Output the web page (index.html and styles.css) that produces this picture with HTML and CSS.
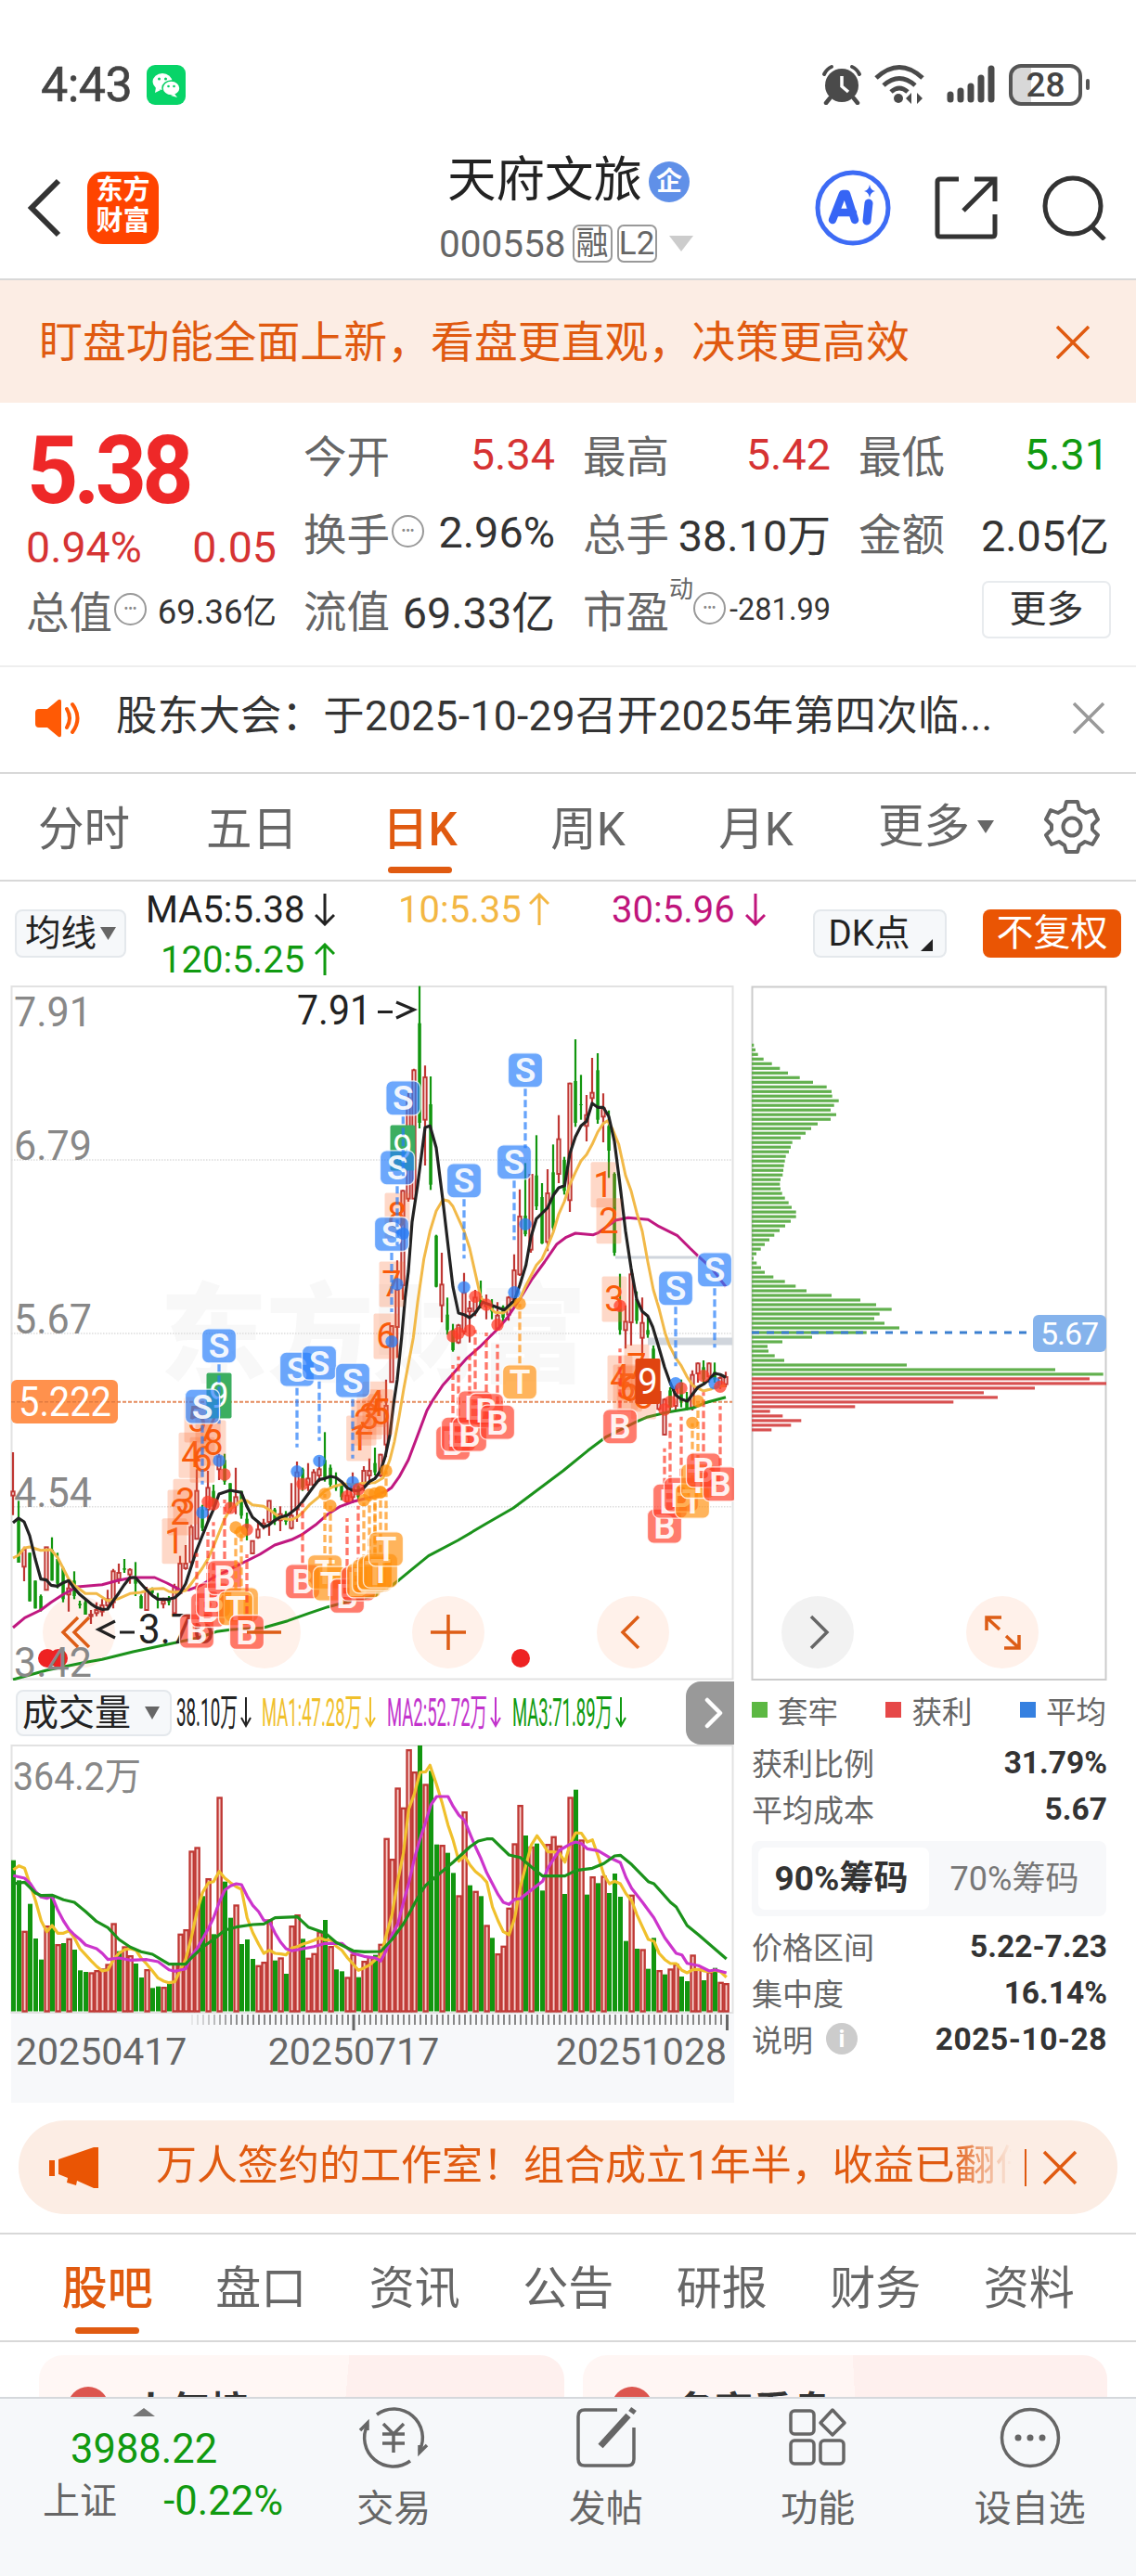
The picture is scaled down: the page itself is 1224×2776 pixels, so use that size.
FILE: index.html
```html
<!DOCTYPE html>
<html lang="zh-CN">
<head>
<meta charset="utf-8">
<title>天府文旅 000558</title>
<link rel="stylesheet" href="styles.css">
</head>
<body>
<div class="phone">
  <div class="status">
    <span class="clock">4:43</span>
    <svg class="wechat" width="42" height="43" viewBox="0 0 42 43"><rect width="42" height="43" rx="9" fill="#07d468"/><ellipse cx="17" cy="18" rx="10.5" ry="9" fill="#fff"/><path d="M10 24l-1 6 6-3z" fill="#fff"/><ellipse cx="26.500" cy="25" rx="9.500" ry="8" fill="#fff" stroke="#07cf64" stroke-width="1.500"/><path d="M30 31l3 4-7-2z" fill="#fff"/><g fill="#07cf64"><circle cx="13.500" cy="15" r="1.500"/><circle cx="20.500" cy="15" r="1.500"/><circle cx="23.500" cy="23" r="1.300"/><circle cx="29.500" cy="23" r="1.300"/></g></svg>
    <span class="grow"></span>
    <svg width="44" height="44" viewBox="0 0 44 44"><circle cx="22" cy="23" r="18" fill="#4a4a4a"/><path d="M22 13v11l7 6" stroke="#fff" stroke-width="3.500" fill="none"/><path d="M3 11q3-6 8-8M41 11q-3-6-8-8" stroke="#4a4a4a" stroke-width="4" fill="none" stroke-linecap="round"/><path d="M9 37l-4 5M35 37l4 5" stroke="#4a4a4a" stroke-width="4.500" stroke-linecap="round"/></svg>
    <svg class="wifi" width="54" height="44" viewBox="0 0 54 44" fill="none" stroke="#4a4a4a" stroke-width="5"><path d="M2 15Q27-8 52 15M10 23Q27 8 44 23M18 30Q27 22 36 30"/><circle cx="26" cy="37" r="5" fill="#4a4a4a" stroke="none"/><path d="M40 31v12l-6-6zM46 31v12l6-6z" fill="#4a4a4a" stroke="none"/></svg>
    <svg class="signal" width="52" height="44" viewBox="0 0 52 44" stroke="#4a4a4a" stroke-width="7" stroke-linecap="round"><path d="M4 33v5M15 29v9M26 24v14M37 15v23M48 5v33"/></svg>
    <span class="battery"><b>28</b></span><i class="battery-tip"></i>
  </div>

  <header class="header">
    <svg class="back" width="38" height="64" viewBox="0 0 38 64" fill="none" stroke="#333" stroke-width="6"><path d="M34 3L5 32l29 29"/></svg>
    <div class="logo">东方<br>财富</div>
    <div class="title">
      <div class="name">天府文旅<span class="corp">企</span></div>
      <div class="code"><span>000558</span><i>融</i><i>L2</i><svg width="26" height="17" viewBox="0 0 26 17"><path d="M0 0h26L13 17z" fill="#ccc"/></svg></div>
    </div>
    <svg class="ai" width="82" height="82" viewBox="0 0 82 82"><circle cx="41" cy="41" r="38" fill="#fff" stroke="#3d6bf5" stroke-width="5"/><path d="M19 54L30 26h4l9 28M23 46h18" fill="none" stroke="#3665f5" stroke-width="8.500" stroke-linejoin="round" stroke-linecap="round"/><path d="M58 36l-2 19" stroke="#3665f5" stroke-width="9" stroke-linecap="round"/><path d="M59 16q1 6 6 7-5 1-6 7-1-6-6-7 5-1 6-7z" fill="#3665f5"/></svg>
    <svg class="share" width="68" height="68" viewBox="0 0 68 68" fill="none" stroke="#333" stroke-width="5"><path d="M26 3H6q-3 0-3 3v56q0 3 3 3h56q3 0 3-3V41M43 3h22v24M65 3L31 37"/></svg>
    <svg class="search" width="70" height="70" viewBox="0 0 70 70" fill="none" stroke="#333" stroke-width="5"><circle cx="33" cy="33" r="30"/><path d="M53 55l14 14"/></svg>
  </header>

  <div class="promo"><span>盯盘功能全面上新，看盘更直观，决策更高效</span><svg width="36" height="36" viewBox="0 0 36 36" stroke="#e05a10" stroke-width="3.500"><path d="M1 1l34 34M35 1L1 35"/></svg></div>

  <section class="quote">
    <div class="price">
      <strong>5.38</strong>
      <div class="pair up"><span>0.94%</span><span>0.05</span></div>
      <div class="pair"><label>总值<i class="dots">•••</i></label><em class="mid">69.36亿</em></div>
    </div>
    <div class="cells">
      <div><label>今开</label><em class="up">5.34</em></div>
      <div><label>最高</label><em class="up">5.42</em></div>
      <div><label>最低</label><em class="down">5.31</em></div>
      <div><label>换手<i class="dots">•••</i></label><em>2.96%</em></div>
      <div><label>总手</label><em>38.10万</em></div>
      <div><label>金额</label><em>2.05亿</em></div>
      <div><label>流值</label><em>69.33亿</em></div>
      <div><label>市盈<sup>动</sup><i class="dots">•••</i></label><em class="small">-281.99</em></div>
      <div><button class="more">更多</button></div>
    </div>
  </section>

  <div class="notice">
    <svg width="52" height="42" viewBox="0 0 52 42"><path d="M4 11h9L25 1q3-1 3 2v36q0 3-3 2L13 31H4q-4 0-4-4V15q0-4 4-4z" fill="#ff5a05"/><path d="M34 11q6 10 0 20M40 6q11 15 0 30" fill="none" stroke="#ff5a05" stroke-width="4" stroke-linecap="round"/></svg>
    <span>股东大会：于2025-10-29召开2025年第四次临...</span>
    <svg width="34" height="34" viewBox="0 0 34 34" stroke="#999" stroke-width="3.500"><path d="M1 1l32 32M33 1L1 33"/></svg>
  </div>

  <nav class="periods">
    <a>分时</a><a>五日</a><a class="on">日K</a><a>周K</a><a>月K</a><a class="last">更多<svg width="18" height="14" viewBox="0 0 18 14"><path d="M0 0h18L9 14z" fill="#666"/></svg></a>
    <svg class="gear" width="60" height="60" viewBox="-30 -30 60 60" fill="none" stroke="#666" stroke-width="4" stroke-linejoin="round"><path d="M-6-27H6L8-19 15-15 23-18 28-8 22-2V3L28 9 22 19 14 16 8 20 6 27H-6L-8 20-14 16-22 19-28 9-22 3V-2L-28-8-23-18-15-15-8-19Z"/><circle r="9.500"/></svg>
  </nav>

  <div class="averages">
    <button class="chip">均线<svg width="17" height="14" viewBox="0 0 17 14"><path d="M0 0h17L8.500 14z" fill="#666"/></svg></button>
    <div class="ma">
      <span class="c5">MA5:5.38<svg width="22" height="36" viewBox="0 0 22 36"><path d="M11 1v33M1 24l10 10 10-10"/></svg></span>
      <span class="c10">10:5.35<svg width="22" height="36" viewBox="0 0 22 36"><path d="M11 35V2M1 12L11 2l10 10"/></svg></span>
      <span class="c30">30:5.96<svg width="22" height="36" viewBox="0 0 22 36"><path d="M11 1v33M1 24l10 10 10-10"/></svg></span>
      <span class="c120">120:5.25<svg width="22" height="36" viewBox="0 0 22 36"><path d="M11 35V2M1 12L11 2l10 10"/></svg></span>
    </div>
    <button class="chip dk">DK点<svg width="13" height="13" viewBox="0 0 13 13"><path d="M13 0v13H0z" fill="#222"/></svg></button>
    <button class="chip adj">不复权</button>
  </div>

  <main class="board">
    <div class="left">
      <svg id="kline" class="kline" width="780" height="749" viewBox="11 1062 780 749"></svg>
      <div class="volbar">
        <button class="chip vol">成交量<svg width="16" height="14" viewBox="0 0 16 14"><path d="M0 0h16L8 14z" fill="#666"/></svg></button>
        <svg id="vollabels" width="500" height="60" viewBox="190 1816 500 60"></svg>
        <span class="side"><svg width="22" height="34" viewBox="0 0 22 34" fill="none" stroke="#fff" stroke-width="4.500" stroke-linecap="round" stroke-linejoin="round"><path d="M3 3l14 14L3 31"/></svg></span>
      </div>
      <svg id="volume" class="volume" width="780" height="290" viewBox="11 1880 780 290"></svg>
      <div class="axis">
        <svg id="ticks" width="780" height="18" viewBox="11 2170 780 18"></svg>
        <div class="dates"><span>20250417</span><span>20250717</span><span>20251028</span></div>
      </div>
    </div>
    <div class="right">
      <svg id="chips" class="chips" width="384" height="749" viewBox="809 1062 384 749"></svg>
      <div class="legend"><span><i class="g"></i>套牢</span><span><i class="r"></i>获利</span><span><i class="b"></i>平均</span></div>
      <div class="row"><span>获利比例</span><b>31.79%</b></div>
      <div class="row"><span>平均成本</span><b>5.67</b></div>
      <div class="seg"><b>90%筹码</b><span>70%筹码</span></div>
      <div class="row"><span>价格区间</span><b>5.22-7.23</b></div>
      <div class="row"><span>集中度</span><b>16.14%</b></div>
      <div class="row"><span>说明<i class="info">i</i></span><b class="wide">2025-10-28</b></div>
    </div>
  </main>

  <div class="adwrap"><div class="ad">
    <svg width="54" height="44" viewBox="0 0 54 44" fill="#ea5504"><path d="M0 14h6v17H0zM10 13L48 0h5v44h-5l-18-8-1 5-10-3 1-5-10-4z"/></svg>
    <span class="adtext">万人签约的工作室！组合成立1年半，收益已翻倍</span>
    <i></i>
    <svg width="38" height="38" viewBox="0 0 38 38" stroke="#e05a10" stroke-width="3.500"><path d="M2 2l34 34M36 2L2 36"/></svg>
  </div></div>

  <nav class="tabs"><a class="on">股吧</a><a>盘口</a><a>资讯</a><a>公告</a><a>研报</a><a>财务</a><a>资料</a></nav>

  <section class="cards">
    <div class="card"><i></i><b>人气榜</b></div>
    <div class="card two"><i></i><b>名家看盘</b></div>
  </section>

  <footer class="bottom">
    <div class="index">
      <svg width="24" height="9" viewBox="0 0 24 9"><path d="M12 0l12 9H0z" fill="#777"/></svg>
      <strong>3988.22</strong>
      <p><span>上证</span><em>-0.22%</em></p>
    </div>
    <div class="item"><svg width="76" height="68" viewBox="-38 -34 76 68" fill="none" stroke="#666" stroke-width="3.500"><path d="M-18-25A31 31 0 0 1 28 14M18 25A31 31 0 0 1-28-14"/><path d="M-36-8l8-8v8M36 8l-8 8V8M-11-15L0-4 11-15M-12-4h24M-12 6h24M0-4v20"/></svg>交易</div>
    <div class="item"><svg width="68" height="68" viewBox="-34 -34 68 68" fill="none" stroke="#666" stroke-width="3.500"><path d="M12-30h-35q-7 0-7 7v46q0 7 7 7h46q7 0 7-7v-34"/><path d="M-6 9L24-24" stroke-width="7"/><path d="M27-27l3-4" stroke-width="7"/></svg>发帖</div>
    <div class="item"><svg width="68" height="68" viewBox="-34 -34 68 68" fill="none" stroke="#666" stroke-width="3.500"><rect x="-29" y="-29" width="25" height="25" rx="4"/><path d="M16-30L29-16 16-3 3-16z" stroke-linejoin="round"/><rect x="-29" y="3" width="25" height="25" rx="4"/><rect x="3" y="3" width="25" height="25" rx="4"/></svg>功能</div>
    <div class="item"><svg width="68" height="68" viewBox="-34 -34 68 68"><circle r="30.500" fill="none" stroke="#666" stroke-width="3.500"/><g fill="#666"><circle cx="-13" r="3.500"/><circle r="3.500"/><circle cx="13" r="3.500"/></g></svg>设自选</div>
  </footer>
</div>
<script src="charts.js"></script>
</body>
</html>
```
FILE: styles.css
```css
* { box-sizing: border-box; }
body { margin: 0; background: #fff; color: #333; font-family: Roboto, "Noto Sans CJK SC", sans-serif; }
svg { display: block; flex: none; }
i, em { font-style: normal; }
button { font: inherit; margin: 0; padding: 0; }
.phone { width: 1224px; height: 2776px; overflow: hidden; display: flex; flex-direction: column; }
.phone > * { flex: none; }
.grow { flex: 1; }

.status { height: 149px; padding: 33px 50px 0 44px; display: flex; align-items: center; }
.clock { font-size: 52px; font-weight: 400; color: #444; letter-spacing: -.5px; width: 114px; -webkit-text-stroke: .6px #444; }
.wifi { margin-left: 13px; }
.signal { margin: 0 15px 0 24px; }
.battery { width: 79px; height: 45px; border: 4px solid #555; border-radius: 13px; background: linear-gradient(90deg, #d8d8d8 28%, #fff 28%); text-align: center; font-size: 37px; line-height: 38px; color: #444; }
.battery b { font-weight: 500; }
.battery-tip { width: 4px; height: 12px; border-radius: 2px; background: #555; margin-left: 4px; }

.header { height: 153px; border-bottom: 2px solid #d8d8d8; display: flex; align-items: center; padding: 0 34px 2px 29px; position: relative; }
.logo { width: 77px; height: 78px; margin-left: 27px; background: #ff4400; border-radius: 17px; color: #fff; font-size: 29px; font-weight: 700; line-height: 33px; text-align: center; padding-top: 4px; }
.title { width: 280px; margin-left: 300px; height: 150px; }
.name { display: flex; align-items: center; height: 64px; margin-top: 15px; font-size: 52.5px; line-height: 60px; color: #222; padding-left: 11px; padding-bottom: 4px; }
.corp { width: 44px; height: 44px; border-radius: 50%; background: #6090e8; color: #fff; font-size: 28px; font-weight: 700; line-height: 43px; text-align: center; margin-left: 7px; margin-top: 5px; }
.code { display: flex; align-items: center; gap: 5px; font-size: 40.5px; color: #666; height: 66px; margin-top: 2px; padding-left: 2px; }
.code i { font-size: 35px; line-height: 38px; height: 41px; min-width: 43px; text-align: center; border: 2px solid #999; border-radius: 7px; }
.code i:first-of-type { margin-left: 2px; }
.code svg { margin-left: 8px; }
.ai { margin-left: 127px; }
.share { margin-left: 47px; }
.search { margin-left: 48px; margin-right: -6px; }

.promo { height: 132px; background: #fcede4; color: #e05a10; display: flex; align-items: center; justify-content: space-between; padding: 2px 50px 0 42px; font-size: 46.900px; white-space: nowrap; }
.promo span { line-height: 60px; }

.quote { height: 285px; border-bottom: 2px solid #eee; display: flex; padding: 14px 29px 0 28px; }
.price { width: 270px; }
.price strong { display: block; height: 119px; line-height: 118px; font-size: 102px; font-weight: 700; letter-spacing: -5px; color: #ee2828; padding-left: 1px; transform: scaleX(.945); transform-origin: 0 50%; }
.pair { display: flex; justify-content: space-between; align-items: center; height: 46px; font-size: 46.500px; color: #333; }
.pair.up { color: #d63333; }
.pair:last-child { margin-top: 2px; height: 82px; }
.pair .mid { font-size: 36.500px; }
.cells { flex: 1; margin-left: 29px; display: grid; grid-template-columns: 271px 267px 1fr; column-gap: 30px; grid-template-rows: 84px 83px 83px; }
.cells > div { display: flex; justify-content: space-between; align-items: center; font-size: 46.800px; white-space: nowrap; }
.quote label { color: #666; font-size: 46.500px; display: flex; align-items: center; }
.cells label { margin-top: -3px; }
.quote em.up { color: #d63333; }
.down { color: #109a10; }
.quote em.small { font-size: 32.500px; }
.dots { width: 35px; height: 35px; border: 2.500px solid #999; border-radius: 50%; font-size: 14px; line-height: 30px; text-align: center; color: #888; margin-left: 2px; }
.quote sup { font-size: 26px; line-height: 26px; align-self: flex-start; margin-right: -1px; width: 25px; }
.more { margin-left: auto; margin-right: -2px; width: 139px; height: 62px; border: 2px solid #e8ebee; border-radius: 7px; background: #fff; color: #333; font-size: 40px; line-height: 54px; }

.notice { height: 115px; border-bottom: 2px solid #d8d8d8; display: flex; align-items: center; padding: 0 34px 3px 38px; font-size: 44.300px; }
.notice span { margin-left: 35px; flex: 1; white-space: nowrap; letter-spacing: .35px; line-height: 60px; margin-top: -4px; }

.periods { height: 116px; border-bottom: 2px solid #d8d8d8; display: flex; align-items: center; position: relative; padding: 0 39px 0 0; font-size: 49.500px; color: #666; }
.periods a { width: 181px; text-align: center; height: 100%; line-height: 120px; display: flex; flex-direction: column; align-items: center; }
.periods a.last { flex-direction: row; margin-left: 41px; width: 140px; gap: 8px; white-space: nowrap; }
.periods .gear { margin-left: auto; }
.on { color: #e05a10; font-weight: 500; }
.on::after { content: ""; width: 69px; height: 7px; border-radius: 4px; background: #e05a10; }
.periods .on::after { margin-top: -20px; }

.averages { height: 112px; display: flex; padding: 0 16px 0 16px; font-size: 40px; position: relative; }
.chip { height: 52px; margin-top: 30px; background: #f6f8fa; border: 2px solid #e4e8ec; border-radius: 8px; color: #222; font-size: 38.500px; line-height: 46px; display: flex; align-items: center; justify-content: center; gap: 4px; width: 120px; white-space: nowrap; }
.ma { width: 719px; margin-left: 21px; display: grid; grid-template-columns: 204px 68px 163px 67px 166px; grid-template-rows: 60px 48px; align-content: start; white-space: nowrap; }
.ma span { display: flex; align-items: center; justify-content: space-between; }
.ma svg { fill: none; stroke: currentColor; stroke-width: 3; }
.c5 { color: #222; }
.c10 { color: #f3b744; grid-column: 3; }
.c30 { color: #c0157c; grid-column: 5; }
.c120 { color: #109a10; padding-left: 16px; }
.dk { width: 144px; gap: 12px; padding: 0 8px 0 10px; }
.dk svg { align-self: flex-end; margin-bottom: 5px; }
.adj { width: 149px; margin-left: auto; background: #ea5504; border: 0; color: #fff; font-size: 40px; }

.board { height: 1204px; display: flex; }
.left { width: 780px; margin-left: 11px; }
.right { width: 384px; margin-left: 18px; }
.volbar { height: 69px; display: flex; align-items: center; padding-left: 6px; justify-content: space-between; }
.vol { margin: 0; height: 50px; width: 168px; gap: 15px; font-size: 39px; padding-right: 6px; }
.side { width: 52px; height: 68px; background: #999; border-radius: 16px 0 0 16px; display: flex; align-items: center; padding-left: 20px; }
.volbar svg[id] { margin-right: auto; margin-left: 5px; }
.axis { height: 96px; background: #f7f8fa; margin-left: 1px; }
.axis svg { margin-left: -1px; }
.dates { display: flex; font-size: 41px; color: #666; line-height: 46px; padding: 0 8px 0 5px; justify-content: space-between; }
.dates span:nth-child(2) { margin-right: 38px; }
.legend { display: flex; justify-content: space-between; height: 63px; align-items: center; color: #666; font-size: 32.500px; padding-right: 1px; }
.legend span { display: flex; align-items: center; }
.legend i { width: 17px; height: 17px; margin-right: 11px; margin-left: 1px; }
.g { background: #5cb843; } .r { background: #e64848; } .b { background: #3580e0; }
.row { height: 50px; display: flex; justify-content: space-between; align-items: center; font-size: 33px; color: #666; padding-left: 1px; }
.row b { color: #333; font-weight: 700; font-size: 33.500px; }
.row b.wide { letter-spacing: .5px; }
.row span { display: flex; align-items: center; }
.info { width: 34px; height: 34px; border-radius: 50%; background: #ccc; color: #fff; font-weight: 700; font-size: 26px; line-height: 34px; text-align: center; margin-left: 14px; }
.seg { height: 81px; margin: 10px 1px 7px; background: #f7f8fa; border-radius: 8px; display: flex; align-items: center; padding: 7px; font-size: 36px; color: #777; }
.seg b { width: 184px; height: 67px; line-height: 67px; background: #fff; border-radius: 7px; color: #333; text-align: center; font-size: 37px; padding-right: 5px; }
.seg span { flex: 1; text-align: center; line-height: 66px; }
.kline text, .volume text { font-family: Roboto, "Noto Sans CJK SC", sans-serif; }

.adwrap { height: 142px; border-bottom: 2px solid #d8d8d8; padding: 19px 20px 0; }
.ad { height: 101px; border-radius: 50px; background: #fcede4; display: flex; align-items: center; padding: 0 43px 0 33px; color: #e05a10; font-size: 44px; }
.adtext { margin-left: 61px; width: 922px; overflow: hidden; white-space: nowrap; line-height: 64px; margin-top: -3px; -webkit-mask-image: linear-gradient(90deg, #000 93%, transparent); mask-image: linear-gradient(90deg, #000 93%, transparent); }
.ad i { width: 2px; height: 40px; background: #e05a10; margin: 0 auto 0 14px; }

.tabs { height: 116px; border-bottom: 2px solid #d8d8d8; display: flex; padding-left: 33px; font-size: 49px; color: #666; }
.tabs a { width: 165.500px; display: flex; flex-direction: column; align-items: center; line-height: 118px; }
.tabs .on::after { margin-top: -18px; }

.cards { height: 59px; overflow: hidden; display: flex; gap: 20px; padding: 14px 31px 0 42px; }
.card { width: 566px; height: 120px; border-radius: 26px; background: linear-gradient(95deg, #fff7f5 58%, #fef0ee 58%); display: flex; padding: 34px 0 0 31px; gap: 25px; font-size: 42px; line-height: 54px; color: #333; }
.card.two { background: linear-gradient(87deg, #fff6f4 52%, #fef0ee 52%); }
.card i { width: 44px; height: 44px; border-radius: 50%; background: #dc564f; }

.bottom { height: 193px; border-top: 2px solid #d5d8dc; background: #f6f8fa; display: flex; }
.index { width: 310px; padding: 10px 5px 0 46px; color: #109a10; }
.index svg { margin-left: 97px; }
.index strong { display: block; font-weight: 400; font-size: 43.500px; line-height: 50px; margin: 11px 0 0 30px; }
.index p { margin: 4px 0 0; display: flex; justify-content: space-between; font-size: 43.500px; line-height: 54px; }
.index p span { color: #666; font-size: 40px; }
.item { width: 228.500px; display: flex; flex-direction: column; align-items: center; color: #666; font-size: 40px; line-height: 60px; padding-top: 8px; gap: 13px; }
```
FILE: charts.js
```js
const RED = '#bf3733', GREEN = '#12960f';
const out = {};
const el = (id, s) => { out[id] = (out[id] || '') + s; };
const flush = id => { document.getElementById(id).innerHTML = out[id]; };

// converts "x,y x,y" in chart units to a polyline
function line(id, pts, map, color, width) {
  const p = pts.trim().split(/\s+/).map(s => map(...s.split(',').map(Number)).map(n => n.toFixed(1)).join(',')).join(' ');
  el(id, `<polyline points="${p}" fill="none" stroke="${color}" stroke-width="${width}" stroke-linejoin="round"/>`);
}
const A = (x, y) => [x / 3, 1440 + y / 3];
const B = (x, y) => [400 + x / 3, 1050 + y / 3];
const C = (x, y) => [400 + x / 3, 1440 + y / 3];
const both = (a, b) => [a, b];

// ---- price chart ----
el('kline', `<text x="172" y="1480" font-size="116" font-weight="900" fill="#f8f8f8" textLength="460">东方财富</text>
<g fill="#fff1ea"><circle cx="85" cy="1759" r="39"/><circle cx="285" cy="1759" r="39"/><circle cx="483" cy="1759" r="39"/><circle cx="682" cy="1759" r="39"/></g>
<rect x="12.500" y="1063" width="777" height="746.500" fill="none" stroke="#e2e2e2" stroke-width="2"/>
<g stroke="#ddd" stroke-width="1.500" stroke-dasharray="1.500 1.500"><path d="M12 1250H789M12 1437H789M12 1623.700H789"/></g>
<path d="M663 1355H755" stroke="#d0d5dc" stroke-width="3"/><path d="M698 1445.500H789" stroke="#d0d5dc" stroke-width="8"/>
<path d="M12 1510.700H789" stroke="#e58a5c" stroke-width="2" stroke-dasharray="4 2"/>`);

const candles = [
  [0, 1440, `r375,502,515,578 g532,590,732,732 r680,690,745,792 g700,700,857,857 g790,790,880,880 g835,840,885,890 r682,682,820,820 g650,690,790,790 g700,720,800,815 g745,750,850,860 r785,815,835,890 g760,790,840,850 g855,865,870,880 g850,860,900,900 r885,900,905,930 r860,885,895,905 r850,870,890,905 r820,850,870,880 r752,760,860,880 r735,765,785,800 g720,750,755,765 r750,755,770,800 g730,780,800,840 g835,840,880,880 r810,825,885,885 g812,818,830,835 g830,850,850,880 r845,855,865,880 g840,850,860,870 r800,810,895,897 r710,735,830,830 r675,735,750,755 r610,617,730,740 r430,500,655,655 g545,560,620,630 r435,490,560,600 g480,500,550,560 r380,390,430,465 g380,400,470,480 g475,475,565,570 r425,520,545,575 g500,500,580,590 g570,590,620,660 r660,662,702,705 r600,625,650,655 r590,605,612,625 r530,532,600,645 g555,560,600,610 r550,575,595,630 g565,575,600,610 r475,580,620,625 r405,440,560,600 g425,430,490,500 r410,460,480,500 r430,440,480,490 r390,430,450,470 g310,400,460,470 g415,425,480,490 g440,480,490,500 g470,480,520,530 r480,515,535,540 r440,480,520,540 g480,485,520,530 r420,435,480,500 r395,435,450,480 g360,410,440,450 r380,383,450,455 r140,225,350,390`],
  [68, 1050, `r1135,1137,1318,1320 r925,1020,1140,1240 r697,700,1005,1052 r375,400,725,735 r305,310,725,727 g38,158,480,498 r295,333,470,618 g330,420,680,697 g842,845,1010,1012 r900,1003,1070,1125 g1045,1100,1150,1165 g1130,1150,1215,1220 r1130,1135,1190,1195 r965,1030,1155,1165 r1055,1080,1090,1190 r1020,1045,1090,1105 g990,1040,1070,1080 r1035,1070,1070,1115 g1050,1070,1090,1115 r1060,1103,1145,1150 g1070,1075,1110,1125 r1040,1045,1100,1120 r905,957,1050,1060 r695,783,970,975 g610,780,840,847 r645,648,890,900 g520,650,750,762 g675,720,870,872 r630,708,865,895 g550,640,820,830 r455,533,645,675 g590,600,700,712 r350,353,730,768 g210,345,480,493 g325,420,422,470 r390,455,490,540 r270,383,400,420 g255,310,470,483 r385,433,460,543 g440,490,570,658 g640,645,900,910 g968,1070,1150,1165 r1070,1123,1150,1210 r950,970,1125,1200 g1025,1050,1120,1130 r1045,1127,1175,1240 g1105,1150,1165,1175 g1200,1210,1250,1260`],
  [116, 1440, `r170,180,235,240 r200,205,318,320 g165,175,230,240 r160,170,225,240 g140,150,210,230 g180,210,235,240 r110,125,230,240 r85,88,120,150 g78,100,140,150 r85,88,130,150 g85,115,140,150 r130,135,160,170 r115,132,155,165`]
];
for (const [k0, y0, s] of candles) s.split(' ').forEach((c, i) => {
  const [a, b, d, e] = c.slice(1).split(',').map(v => y0 + v / 3);
  const x = 14 + 6 * (k0 + i), h = Math.max(d - b, 1);
  if (c[0] === 'r') el('kline', `<path d="M${x} ${a}V${b}M${x} ${d}V${e}" stroke="${RED}" stroke-width="2.200"/><rect x="${x - 1.700}" y="${b}" width="3.400" height="${h}" fill="#fbe3e0" stroke="${RED}" stroke-width="1.900"/>`);
  else el('kline', `<path d="M${x} ${a}V${e}" stroke="${GREEN}" stroke-width="2.200"/><rect x="${x - 1.700}" y="${b}" width="3.500" height="${h}" fill="${GREEN}"/>`);
});

const join = (a, b, c) => {
  const f = (s, m) => (s || '').trim().split(/\s+/).filter(Boolean).map(p => m(...p.split(',').map(Number)).join(','));
  return [...f(a, A), ...f(b, B), ...f(c, C)].join(' ');
};
line('kline', join(
  '42,1110 150,1080 270,1055 330,1045 430,1020 570,990 640,975 700,955 750,948 850,943 930,920 1000,895 1060,875 1110,862 1170,848 1215,838', '',
  '20,828 60,810 90,788 130,755 185,710 280,660 370,607 460,555 560,480 620,435 700,370 760,325 800,305 860,275 890,262 960,245 1040,232 1080,215 1146,197'), both, '#1b921b', 3);
line('kline', join(
  '42,942 80,910 132,885 165,860 204,835 250,810 330,803 380,790 430,780 500,780 540,798 582,820 610,820 650,805 690,780 740,755 780,735 840,705 888,675 942,658 978,640 1020,610 1060,575 1100,550 1140,535 1180,525 1225,515', '20,1682 50,1670 65,1660 90,1625 120,1570 150,1490 180,1410 200,1375 230,1330 270,1285 310,1240 350,1205 385,1170 410,1145 440,1110 480,1050 520,985 560,930 600,872 630,850 660,837 718,842 735,835 790,795 830,787 895,793 930,815 990,845 1030,885 1056,910 1100,950 1146,1010'), both, '#c01880', 3);
line('kline', join(
  '42,717 60,708 78,685 96,681 132,692 165,690 186,715 204,750 222,785 240,805 276,832 312,832 348,855 384,848 420,832 456,828 492,817 528,815 546,825 565,828 600,822 618,800 636,775 654,750 672,720 690,680 708,635 726,590 744,560 762,545 780,530 798,532 816,545 852,550 880,567 906,588 942,593 960,585 978,570 1000,545 1030,520 1050,500 1080,485 1110,477 1140,480 1176,475 1212,473 1238,458',
  '60,1570 75,1510 90,1430 105,1340 120,1260 136,1175 150,1060 170,920 190,830 210,765 232,728 250,733 264,750 282,790 300,830 318,885 336,965 354,1045 372,1065 400,1093 426,1095 450,1075 480,1050 498,1010 516,975 534,940 552,920 570,880 588,835 606,775 624,735 642,680 660,640 678,603 696,583 714,550 732,510 750,482 764,473 780,500 800,550 822,650 840,700 858,770 876,830 894,930 912,1020 930,1080 950,1160 964,1200',
  '984,70 1002,95 1020,130 1040,160 1074,177 1100,170 1120,163 1146,160'), both, '#f2b948', 3);
line('kline', join(
  '42,603 60,588 78,600 96,645 114,720 132,785 150,788 165,805 186,808 204,797 222,790 240,815 258,835 276,850 294,865 312,877 330,883 348,882 366,855 384,830 402,803 420,780 438,780 456,800 474,820 492,838 510,850 546,850 565,845 582,830 600,800 618,745 636,690 654,645 672,600 690,560 708,510 744,498 780,505 798,550 816,585 834,600 852,617 870,610 888,595 906,585 930,578 960,555 978,535 996,510 1014,485 1032,463 1050,460 1068,453 1086,457 1104,470 1122,490 1140,498 1158,500 1176,490 1194,470 1212,460 1230,435 1245,390',
  '60,1490 72,1390 84,1310 98,1175 110,1040 120,960 132,800 150,680 174,495 190,490 210,560 230,720 250,890 264,1010 282,1095 300,1100 318,1110 336,1095 360,1060 390,1070 430,1085 462,1055 480,1005 500,940 516,850 534,790 570,755 588,715 606,690 625,683 642,580 660,525 678,490 696,475 714,417 732,430 750,430 768,460 786,540 804,680 822,830 840,950 858,1050 876,1090 894,1105 910,1140 928,1200',
  '948,100 966,150 984,190 1002,203 1022,210 1040,185 1056,165 1074,155 1092,140 1110,120 1128,124 1146,133'), both, '#222', 3.2);

// high and low callouts sit under the trade markers
el('kline', `<text x="320" y="1103.500" font-size="44" fill="#222" textLength="80" lengthAdjust="spacingAndGlyphs">7.91</text><path d="M407 1090.500h16M427 1080l19 8-19 9" fill="none" stroke="#222" stroke-width="3.200"/>
<path d="M124 1747l-18 9 18 9M129 1759h16" fill="none" stroke="#222" stroke-width="3.200"/><text x="149" y="1771" font-size="44" fill="#222" textLength="82" lengthAdjust="spacingAndGlyphs">3.76</text>`);

// nine-turn counters
const count = (x, y, n, box, ink) => el('kline', `<rect x="${x - 13.500}" y="${y - 24.500}" width="27" height="49" rx="2" fill="${box || 'rgba(250,110,50,.27)'}"/><text x="${x}" y="${y + 13}" font-size="38" text-anchor="middle" fill="${ink || '#f95a0a'}">${n}</text>`);
const at = (map, list) => list.split(' ').forEach(s => { const [n, x, y] = s.split(','); count(...map(+x, +y), n); });
at(A, '1,564,662 2,582,570 3,600,535 4,618,385 5,636,270 6,654,400 7,672,300 8,690,345 1,1160,330 2,1176,280 3,1194,260 4,1212,220 5,1230,245');
at(B, '6,48,1170 7,66,1002 8,84,780 1,750,680 2,768,797 3,786,1050');
at(C, '4,804,135 5,822,165 6,835,170 7,858,100 8,880,195');
count(236, 1504, 9, '#3cae60', '#fff');
count(434, 1237, 9, '#3cae60', '#fff');
count(698, 1488.5, 9, '#e04410', '#fff');

// trade markers
const tone = { S: '38,125,250', B: '255,60,40', T: '255,145,15' };
const marks = (map, list) => list.split(' ').forEach(s => {
  const [t, px, py] = s.split(','), [x, y] = map(+px, +py), c = tone[t];
  const d = t === 'S' ? `M${x} ${y + 20}v64` : `M${x} ${y - 20}v-64`;
  el('kline', `<path d="${d}" stroke="rgba(${c},.7)" stroke-width="3.300" stroke-dasharray="8 4"/>
  <rect x="${x - 18.500}" y="${y - 18.500}" width="37" height="37" rx="7" fill="rgba(${c},.68)" stroke="#fff" stroke-opacity=".8" stroke-width="1.300"/>
  <text x="${x}" y="${y + 13}" font-size="37" font-weight="600" text-anchor="middle" fill="#fff" fill-opacity=".92">${t}</text>`);
});
marks(A, 'S,708,31 S,654,227 S,960,107 S,1032,86 S,1140,143 B,636,953 B,672,885 B,690,853 B,726,780 T,780,868 T,762,880 B,798,957 B,978,793 T,1050,762 T,1068,800 B,1122,840 B,1158,800 T,1176,790 T,1194,775 T,1212,770');
marks(C, 'T,12,765 T,30,758 T,48,688 B,264,345 B,282,317 B,318,317 B,336,232 B,372,240 B,408,278 T,480,148 B,804,292 B,948,614 B,966,533 B,1002,512 T,1038,533 T,1056,468 B,1074,433 B,1128,478');
marks(B, 'S,66,840 S,84,625 S,103,400 S,300,667 S,462,607 S,498,310 S,984,1015 S,1110,955');
const dots = (map, c, list) => list.split(' ').forEach(s => { const [x, y] = map(...s.split(',').map(Number)); el('kline', `<circle cx="${x}" cy="${y}" r="6.700" fill="rgba(${c},.75)"/>`); });
dots(B, tone.S, '103,838 84,1002 66,1187 300,1012 462,1028 498,808');
dots(A, tone.S, '708,402 654,570 960,437 1032,403 1140,472');
dots(C, tone.S, '984,152 1110,152');
dots(B, tone.B, '336,1042 372,1068 318,1152 264,1170 282,1160 408,1133 804,1072');
dots(A, tone.B, '726,447 672,535 690,543 744,555 798,625 978,478 1122,518 1158,495');
dots(C, tone.B, '948,237 966,212 1002,168 1074,128 1128,163');
dots(B, tone.T, '480,1065');
dots(A, tone.T, '762,618 780,633 1050,510 1068,548 1176,530 1194,512 1212,508 1230,505 1248,435');
dots(C, tone.T, '30,503 1038,280 1056,210');

const axis = [[7.91, 1106], [6.79, 1250], [5.67, 1437], [4.54, 1624]];
axis.forEach(([v, y]) => el('kline', `<text x="15" y="${y}" font-size="44" fill="#888" textLength="84" lengthAdjust="spacingAndGlyphs">${v}</text>`));
el('kline', `<g fill="#ee2222"><circle cx="51" cy="1787" r="10"/><circle cx="63" cy="1787" r="10"/><circle cx="561" cy="1787" r="10"/></g>
<text x="15" y="1807" font-size="44" fill="#888" textLength="84" lengthAdjust="spacingAndGlyphs">3.42</text>
<rect x="12" y="1487" width="115" height="47" rx="6" fill="#ff914d"/><path d="M12 1510.700H127" stroke="#e07a40" stroke-width="1.500" stroke-dasharray="4 2"/>
<text x="20" y="1526" font-size="44" fill="#fff" textLength="100" lengthAdjust="spacingAndGlyphs">5.222</text>
<g fill="none" stroke="#dd5d16" stroke-width="3.500"><path d="M84 1743l-16 16 16 16M96 1743l-16 16 16 16M266 1759h37M464 1759h38M483 1740v38M688 1742l-17 17 17 17"/></g>`);
flush('kline');

// ---- volume ----
const V = (x, y) => [x / 1.96, 1800 + y / 3];
const vols = 'g614 g679 r843 g755 g867 g935 r826 g733 r886 g882 r867 g903 g970 g975 r977 r970 r965 r950 r818 g908 r893 r922 g948 g993 r967 g1027 g1022 r1024 g1013 r946 r852 r838 r584 r572 g730 r673 g853 r410 g683 g800 r758 g885 g870 g933 r954 r943 r806 g938 r929 g981 r826 r790 g868 r930 r915 r845 g807 r892 g967 g973 r992 r918 g992 r940 r925 g920 r885 r543 r610 r380 r444 r256 r328 g243 r368 g325 g563 r565 g590 g655 r728 r457 g695 r714 g730 r824 g865 r916 r891 r768 r560 r436 g534 r570 g560 g712 r562 r537 r567 g723 r410 g386 r548 g725 r667 g688 r665 g720 g657 g732 g875 r726 g900 r902 g965 g865 r970 g983 r965 r950 g990 g1005 r920 r965 g1002 r975 g962 r1008 r1012';
el('volume', `<rect x="12.500" y="1881" width="777" height="288" fill="none" stroke="#e2e2e2" stroke-width="2"/><text x="14" y="1929" font-size="42" fill="#888" textLength="138" lengthAdjust="spacingAndGlyphs">364.2万</text>`);
vols.split(' ').forEach((s, k) => {
  const y = 1800 + s.slice(1) / 3, x = 14.5 + 6 * k, h = 2167.5 - y;
  el('volume', s[0] === 'g' ? `<rect x="${x - 2.500}" y="${y}" width="5" height="${h}" fill="${GREEN}"/>` : `<rect x="${x - 2}" y="${y + .8}" width="4.200" height="${h - .8}" fill="#f6cfcb" stroke="${RED}" stroke-width="2.300"/>`);
});
line('volume', '28,645 40,632 52,640 64,695 75,745 87,810 99,845 110,825 122,850 134,850 146,842 157,865 169,900 181,920 193,940 204,957 216,972 228,968 240,935 251,915 263,903 275,900 287,905 298,930 310,950 322,972 334,995 346,1005 357,1010 369,1007 381,968 392,935 404,865 416,780 428,718 440,687 451,683 463,650 475,672 487,687 499,700 510,708 522,800 534,848 546,885 557,915 569,905 581,915 593,917 604,920 616,898 628,893 640,885 651,880 663,873 675,865 687,872 699,872 710,892 722,905 734,930 746,950 757,970 769,962 781,952 793,935 804,925 816,855 828,790 840,680 852,590 863,450 875,400 887,330 899,328 908,307 922,370 934,430 946,500 957,550 969,617 981,600 993,630 1004,650 1016,665 1028,685 1040,765 1052,810 1063,845 1075,855 1087,800 1099,700 1110,635 1122,565 1134,535 1146,560 1157,587 1169,587 1181,590 1193,620 1204,560 1216,525 1228,527 1240,555 1251,548 1263,600 1275,660 1287,690 1298,682 1310,690 1322,722 1334,745 1345,790 1357,830 1369,870 1381,876 1392,915 1404,935 1416,948 1428,948 1440,970 1451,978 1463,968 1475,967 1487,972 1498,975 1510,970 1522,975 1534,992', V, '#f0c02c', 3.2);
line('volume', '28,664 52,672 64,690 75,715 87,733 99,737 110,730 122,775 134,810 146,838 157,855 169,870 181,888 204,900 216,915 228,935 251,930 275,937 310,935 334,942 357,968 369,973 392,965 404,925 416,900 428,868 440,835 451,800 463,750 475,710 487,697 499,690 510,693 522,730 534,760 546,780 557,808 569,812 581,850 593,880 604,900 616,907 640,900 663,893 687,883 722,883 746,915 769,925 793,930 804,940 816,905 828,855 840,820 852,750 863,690 875,610 887,545 899,490 910,435 922,408 946,408 957,440 969,468 981,485 993,530 1004,570 1016,610 1028,655 1040,690 1052,725 1063,750 1075,757 1087,740 1099,738 1122,710 1146,682 1157,640 1169,610 1181,582 1204,562 1216,555 1228,560 1240,577 1263,583 1287,605 1310,622 1322,670 1334,705 1357,750 1381,800 1404,865 1428,915 1440,920 1451,947 1475,955 1498,972 1510,968 1534,978', V, '#cc35cc', 3.2);
line('volume', '28,690 52,685 75,720 87,728 110,727 134,742 157,750 181,780 204,812 228,832 251,870 275,895 298,910 322,918 346,940 357,950 392,950 404,930 428,895 451,870 475,840 499,830 534,822 557,820 581,800 628,797 651,830 687,850 710,880 746,907 769,910 804,909 828,870 852,820 863,790 875,755 887,722 899,695 922,665 957,620 993,570 1010,552 1028,545 1040,545 1075,597 1099,605 1122,635 1146,665 1193,665 1216,647 1251,640 1275,625 1298,600 1310,598 1334,628 1369,683 1381,690 1416,750 1428,765 1451,825 1475,855 1534,933', V, '#1b921b', 3.2);
flush('volume');

[['38.10万', 189, 66, '#222'], ['MA1:47.28万', 281, 108, '#f0c02c'], ['MA2:52.72万', 416, 108, '#c233cc'], ['MA3:71.89万', 551, 108, '#109a10']].forEach(([t, x, w, c]) =>
  el('vollabels', `<text x="${x + 1}" y="1860" font-size="42" fill="${c}" textLength="${w}" lengthAdjust="spacingAndGlyphs">${t}</text><path d="M${x + w + 10} 1829v31m-5-9l5 9 5-9" fill="none" stroke="${c}" stroke-width="2"/>`));
flush('vollabels');

for (let x = 206; x < 783; x += 6) el('ticks', `<rect x="${x}" y="2171" width="2" height="11" fill="#888" opacity="${Math.min(1, .15 + (x - 206) / 60)}"/>`);
el('ticks', '<rect x="379.500" y="2171" width="3" height="17" fill="#666"/><rect x="782" y="2171" width="3" height="17" fill="#666"/>');
flush('ticks');

// ---- cost distribution ----
const green = [97,102,110,128,155,181,207,245,288,332,348,350,371,356,345,363,345,303,282,264,248,221,216,210,200,197,194,192,190,183,181,183,188,197,209,219,233,233,216,198,180,163,147,132,119,105,96,106,120,132,160,197,232,267,348,441,492,542,503,486,519,567,461,285,189,141,144,164,195,591,1071,1226];
const red = [1182,1236,1005,840,885,742,424,149,190,250,217,154];
el('chips', '<circle cx="881" cy="1759" r="39" fill="#f2f2f2"/><circle cx="1080" cy="1759" r="39" fill="#fff1ea"/><rect x="810.500" y="1063.500" width="381" height="746.500" fill="none" stroke="#ccc" stroke-width="2"/>');
green.concat(red).forEach((v, i) => el('chips', `<rect x="810" y="${(1124.7 + i * 4.995).toFixed(1)}" width="${((v - 90) / 3).toFixed(1)}" height="3.200" fill="${i < green.length ? '#62b04e' : '#d85050'}"/>`));
el('chips', `<path d="M810 1436h297" stroke="#3b7fd0" stroke-width="3" stroke-dasharray="8 8"/><rect x="1113" y="1417" width="79" height="40" rx="6" fill="#85b3ec"/><text x="1121" y="1449" font-size="34" fill="#fff" textLength="63">5.67</text>
<path d="M874 1742l17 17-17 17" fill="none" stroke="#666" stroke-width="3.500"/>
<g fill="none" stroke="#dd5d16" stroke-width="3.500"><path d="M1063 1757v-14h16M1063 1743l14 13M1098 1762v14h-16M1098 1776l-14-13"/></g>`);
flush('chips');
```
